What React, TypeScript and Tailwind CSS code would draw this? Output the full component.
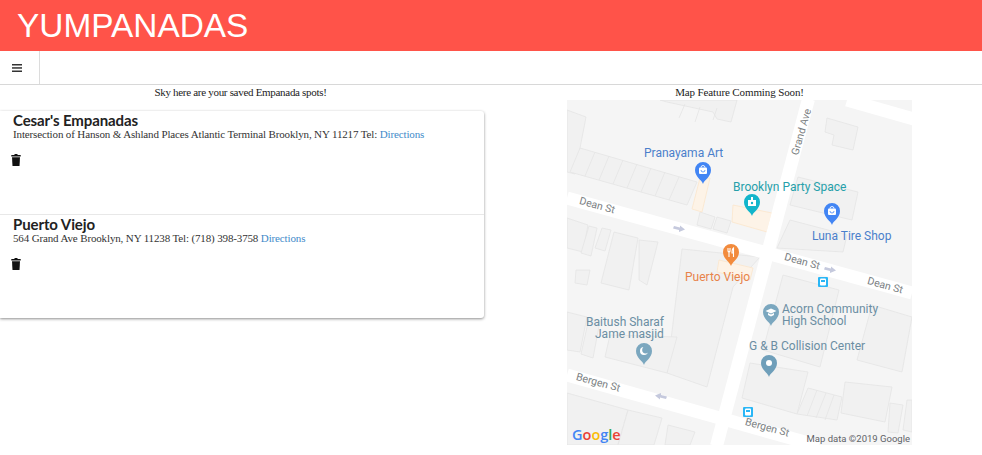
const buildings: string[] = [
  "0,10 19,17 8,74 0,72",
  "13,48 130,82 120,105 3,72",
  "93,0 170,0 164,22 150,19 146,12 100,2",
  "260,18 291,27 286,50 265,45 267,35 258,32",
  "231,77 291,92 285,120 223,105",
  "223,120 280,135 276,152 210,148",
  "133,112 148,117 144,129 130,125",
  "150,117 164,121 160,133 146,129",
  "0,118 21,125 16,152 0,148",
  "22,126 30,128 24,156 14,153",
  "35,128 44,130 38,151 28,148",
  "47,132 71,138 62,190 34,183",
  "72,140 91,142 80,185 72,180",
  "115,149 193,157 166,187 140,287 100,273",
  "216,175 272,190 253,267 196,250",
  "305,205 345,217 335,272 290,260",
  "183,263 241,272 230,314 175,298",
  "241,288 275,297 270,320 230,314",
  "278,282 325,287 318,322 274,313",
  "323,303 336,305 331,333 321,332",
  "0,212 20,217 13,252 0,250",
  "22,218 33,221 26,258 14,254",
  "43,235 110,237 100,273 38,257",
  "0,293 61,310 51,345 0,345",
  "61,310 95,318 87,345 51,345",
  "101,325 128,332 123,345 98,345",
  "9,170 23,170 20,185 8,183",
  "340,300 345,300 345,332 336,330",
];
const dividers: number[][] = [
  [28,52,18,76],[42,56,32,80],[56,60,46,84],[70,64,60,88],[84,68,74,92],[98,72,88,96],[112,77,102,100],
  [118,4,112,18],[133,7,128,22],[150,8,146,20],
  [250,290,240,316],[259,293,249,318],[267,295,258,320],
];
type Glyph = "bag" | "lock" | "food" | "moon" | "cap" | "dot";
const pins: { x: number; y: number; c: string; g: Glyph }[] = [
  { x: 136, y: 74, c: "#4285f4", g: "bag" },
  { x: 185, y: 106, c: "#12b5cb", g: "lock" },
  { x: 265, y: 115, c: "#4285f4", g: "bag" },
  { x: 164, y: 156, c: "#f28b3d", g: "food" },
  { x: 77, y: 255, c: "#7ba7bf", g: "moon" },
  { x: 204, y: 216, c: "#7ba7bf", g: "cap" },
  { x: 202, y: 267, c: "#6f9fba", g: "dot" },
];
const labels = [
  { x: 77, y: 57, t: "Pranayama Art", c: "#4a7fcb" },
  { x: 166, y: 91, t: "Brooklyn Party Space", c: "#26a0aa" },
  { x: 245, y: 140, t: "Luna Tire Shop", c: "#4a7fcb" },
  { x: 118, y: 181, t: "Puerto Viejo", c: "#e8834a" },
  { x: 215, y: 213, t: "Acorn Community", c: "#6b8ea3" },
  { x: 215, y: 225, t: "High School", c: "#6b8ea3" },
  { x: 19, y: 226, t: "Baitush Sharaf", c: "#6b8ea3" },
  { x: 28, y: 238, t: "Jame masjid", c: "#6b8ea3" },
  { x: 182, y: 250, t: "G & B Collision Center", c: "#6b8ea3" },
];
const streets = [
  { x: 30, y: 106, r: 15.5, t: "Dean St" },
  { x: 235, y: 162, r: 15.5, t: "Dean St" },
  { x: 318, y: 186, r: 15.5, t: "Dean St" },
  { x: 31, y: 283, r: 15.5, t: "Bergen St" },
  { x: 200, y: 328, r: 15.5, t: "Bergen St" },
  { x: 235, y: 32, r: -74, t: "Grand Ave" },
];

function PinGlyph({ x, cy, g, c }: { x: number; cy: number; g: Glyph; c: string }) {
  if (g === "dot") return <circle cx={x} cy={cy} r="3" fill="#fff" />;
  if (g === "bag")
    return (
      <g>
        <rect x={x - 4} y={cy - 2.5} width="8" height="6.500" rx="1" fill="#fff" />
        <path d={`M${x - 2} ${cy - 2.5}a2 2 0 0 1 4 0`} fill="none" stroke="#fff" strokeWidth="0.9" />
        <path d={`M${x - 2} ${cy}a2 2 0 0 0 4 0`} fill="none" stroke={c} strokeWidth="0.8" />
      </g>
    );
  if (g === "lock")
    return (
      <g>
        <rect x={x - 4} y={cy - 2} width="8" height="6" fill="#fff" />
        <rect x={x - 1} y={cy - 5} width="2" height="3" fill="#fff" />
        <circle cx={x} cy={cy + 1} r="1.200" fill={c} />
      </g>
    );
  if (g === "food")
    return (
      <g fill="none" stroke="#fff" strokeWidth="1.100">
        <path d={`M${x - 3} ${cy - 4}v3a1 1 0 0 0 2 0v-3M${x - 2} ${cy - 1}v6`} />
        <path d={`M${x + 2.500} ${cy + 5}v-9c-1.500 1-1.500 3-1.500 5h1.500`} />
      </g>
    );
  if (g === "moon")
    return (
      <g>
        <circle cx={x} cy={cy} r="4" fill="#fff" />
        <circle cx={x + 1.600} cy={cy - 1} r="3.400" fill={c} />
      </g>
    );
  return (
    <g fill="#fff">
      <path d={`M${x} ${cy - 3.500}l5.500 2.500-5.500 2.500-5.500-2.500z`} />
      <path d={`M${x - 3} ${cy + 1}l3 1.500 3-1.500v2l-3 1.500-3-1.500z`} />
    </g>
  );
}

function Pin({ x, y, c, g }: { x: number; y: number; c: string; g: Glyph }) {
  return (
    <g>
      <path d={`M${x} ${y + 10}c-1-4-8-7-8-14a8 8 0 0 1 16 0c0 7-7 10-8 14z`} fill={c} />
      <PinGlyph x={x} cy={y - 4} g={g} c={c} />
    </g>
  );
}

function Bus({ x, y }: { x: number; y: number }) {
  return (
    <g>
      <rect x={x} y={y} width="10" height="10" rx="1" fill="#29b6f6" />
      <rect x={x + 2} y={y + 1.500} width="6" height="7" rx="1" fill="#fff" />
      <rect x={x + 3} y={y + 3} width="4" height="2" fill="#29b6f6" />
    </g>
  );
}

function MapArt() {
  return (
    <svg viewBox="0 0 345 345" className="block h-[345px] w-[345px] bg-[#f5f5f5]" style={{ fontFamily: "Roboto, sans-serif" }}>
      <g fill="#f1f1f1" stroke="#e5e5e5" strokeWidth="0.8">
        {buildings.map((p) => <polygon key={p} points={p} />)}
      </g>
      <g stroke="#e4e4e4" strokeWidth="0.8">
        {dividers.map((d) => <line key={d.join()} x1={d[0]} y1={d[1]} x2={d[2]} y2={d[3]} />)}
      </g>
      <g fill="#fdf3e7" stroke="#fbe6cc" strokeWidth="0.8">
        <polygon points="133,78 143,78 135,112 125,109" />
        <polygon points="166,105 205,113 200,132 165,122" />
        <polygon points="152,160 186,168 183,180 150,172" />
      </g>
      <g stroke="#ffffff" strokeWidth="13" fill="none">
        <line x1="0" y1="98" x2="345" y2="193" />
        <line x1="0" y1="275" x2="252" y2="346" />
        <line x1="280" y1="0" x2="350" y2="20" />
        <line x1="241.5" y1="-1" x2="149.5" y2="346" />
      </g>
      <g fill="#c5c9dd">
        <path d="M107 126l6 1.500 0-2 5 4-6 2.500 0-2-6-1.500z" />
        <path d="M258 167l6 1.500 0-2 5 4-6 2.500 0-2-6-1.500z" />
        <path d="M99 299l-6-1.500 0 2-5-4 6-2.500 0 2 6 1.500z" />
      </g>
      {streets.map((s) => (
        <text key={s.x + s.t} x={s.x} y={s.y} transform={`rotate(${s.r} ${s.x} ${s.y})`} textAnchor="middle" dominantBaseline="middle" fontSize="10.500" fill="#7c7f83">{s.t}</text>
      ))}
      {pins.map((p) => <Pin key={p.x + "," + p.y} {...p} />)}
      {labels.map((l) => (
        <text key={l.t} x={l.x} y={l.y} fontSize="12" fill={l.c}>{l.t}</text>
      ))}
      <Bus x={251} y={177} />
      <Bus x={176} y={307} />
      <text x="5" y="340" fontSize="14.500" fontWeight="600" style={{ fontFamily: '"Open Sans", sans-serif' }}>
        <tspan fill="#4285f4">G</tspan><tspan fill="#ea4335">o</tspan><tspan fill="#fbbc05">o</tspan><tspan fill="#4285f4">g</tspan><tspan fill="#34a853">l</tspan><tspan fill="#ea4335">e</tspan>
      </text>
      <text x="343" y="342" textAnchor="end" fontSize="9.500" fill="#5f6368">Map data ©2019 Google</text>
    </svg>
  );
}

function Trash() {
  return (
    <svg viewBox="0 0 10 12" className="ml-[11px] block h-[12px] w-[10px]" fill="#111">
      <path d="M3.500 0h3v1h3.200v1.600H.300V1h3.200z" />
      <path d="M1 3.200h8l-.5 8.800H1.500z" />
    </svg>
  );
}

function Item({ name, address, top }: { name: string; address: string; top?: boolean }) {
  return (
    <div className={top ? "h-[104px] border-b border-[#e8e8e8]" : "h-[103px]"}>
      <h3 className="pl-[13px] font-['Lato',sans-serif] text-[15px] font-bold leading-[18px] tracking-[-0.1px] text-[#222]">{name}</h3>
      <p className="mt-[-2px] pl-[13px] font-['Liberation_Serif',serif] text-[11px] leading-[14px] tracking-[-0.14px] text-[#333]">
        {address} <a className="text-[#428bca]">Directions</a>
      </p>
      <div className="mt-[13px]"><Trash /></div>
    </div>
  );
}

export default function App() {
  return (
    <div className="h-[455px] w-[982px] overflow-hidden bg-white font-['Liberation_Serif',serif] text-[#222]">
      <header className="flex h-[51px] items-center bg-[#ff5349] pl-[17px] font-['Liberation_Sans',sans-serif] text-[33.4px] leading-none text-white">YUMPANADAS</header>
      <nav className="flex h-[34px] border-b border-[#d8d8d8]">
        <div className="flex w-[40px] items-center justify-center border-r border-[#dcdcdc] pr-[6px]">
          <svg viewBox="0 0 10 8" className="h-[8px] w-[10px]" fill="#333">
            <rect width="10" height="1.500" />
            <rect y="3.200" width="10" height="1.500" />
            <rect y="6.500" width="10" height="1.500" />
          </svg>
        </div>
      </nav>
      <main className="flex">
        <section className="w-[491px] pr-[7px]">
          <p className="h-[26px] pr-[3px] text-center text-[11px] leading-[15px] tracking-[-0.3px]">Sky here are your saved Empanada spots!</p>
          <div className="w-[484px] rounded-r-[3px] bg-white shadow-[0_1px_3px_rgba(0,0,0,0.45)]">
            <Item top name="Cesar's Empanadas" address="Intersection of Hanson & Ashland Places Atlantic Terminal Brooklyn, NY 11217 Tel:" />
            <Item name="Puerto Viejo" address="564 Grand Ave Brooklyn, NY 11238 Tel: (718) 398-3758" />
          </div>
        </section>
        <section className="w-[491px] pl-[6px]">
          <p className="h-[15px] text-center text-[11px] leading-[15px] tracking-[-0.12px]">Map Feature Comming Soon!</p>
          <div className="flex justify-center"><MapArt /></div>
        </section>
      </main>
    </div>
  );
}
